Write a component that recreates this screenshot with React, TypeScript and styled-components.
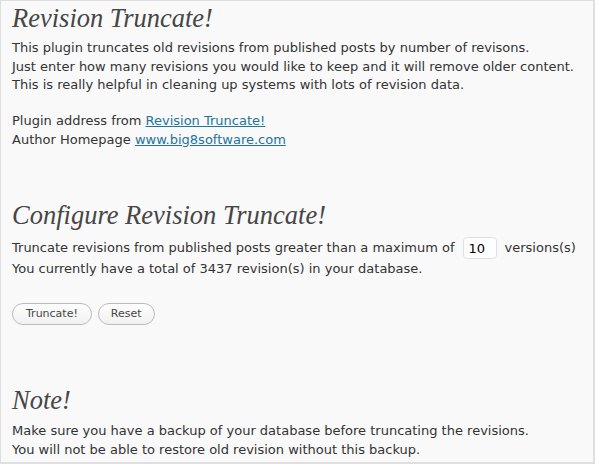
import React from "react";
import styled, { createGlobalStyle } from "styled-components";

const Global = createGlobalStyle`
  html, body { margin: 0; padding: 0; background: #f9f9f9; }
  * { box-sizing: border-box; }
`;

const Page = styled.div`
  width: 595px;
  height: 464px;
  background: #f9f9f9;
  border-top: 1px solid #dfdfdf;
  border-left: 1px solid #dfdfdf;
  border-right: 2px solid #dfdfdf;
  border-bottom: 2px solid #dfdfdf;
  padding: 0 11px;
  color: #333;
  font-family: "DejaVu Sans", Verdana, sans-serif;
  font-size: 13px;
  line-height: 18.6px;
  overflow: hidden;
`;

const Title = styled.h2<{ $top: number; $bottom: number }>`
  margin: ${(p) => p.$top}px 0 ${(p) => p.$bottom}px;
  font-family: "Liberation Serif", Georgia, serif;
  font-style: italic;
  font-weight: normal;
  font-size: 26.5px;
  line-height: 30px;
  color: #464646;
`;

const Para = styled.p<{ $bottom?: number }>`
  margin: 0 0 ${(p) => p.$bottom ?? 0}px;
`;

const Link = styled.a`
  color: #21759b;
  text-decoration: underline;
`;

const InputRow = styled.div`
  display: flex;
  align-items: center;
  height: 24px;
  white-space: nowrap;
`;

const NumInput = styled.input`
  width: 34px;
  height: 22px;
  margin: 0 8px 0 8px;
  padding: 0 5px;
  border: 1px solid #dfdfdf;
  border-radius: 4px;
  background: #fff;
  font-family: "DejaVu Sans", Verdana, sans-serif;
  font-size: 13px;
  color: #000;
  outline: none;
`;

const Buttons = styled.div`
  display: flex;
  gap: 6px;
  margin-top: 24px;
`;

const Button = styled.button<{ $pad: number }>`
  height: 22px;
  padding: 0 ${(p) => p.$pad}px;
  border: 1px solid #bbb;
  border-radius: 11px;
  background: linear-gradient(#fefefe, #f1f1f1);
  color: #464646;
  font-family: "DejaVu Sans", Verdana, sans-serif;
  font-size: 11px;
  line-height: 20px;
  cursor: pointer;
`;

export default function App() {
  return (
    <>
      <Global />
      <Page>
        <Title $top={2} $bottom={6}>Revision Truncate!</Title>
        <Para $bottom={17.4}>
          This plugin truncates old revisions from published posts by number of revisons.
          <br />
          Just enter how many revisions you would like to keep and it will remove older content.
          <br />
          This is really helpful in cleaning up systems with lots of revision data.
        </Para>
        <Para>
          Plugin address from <Link href="#">Revision Truncate!</Link>
          <br />
          Author Homepage <Link href="#">www.big8software.com</Link>
        </Para>
        <Title $top={51} $bottom={6}>Configure Revision Truncate!</Title>
        <InputRow>
          Truncate revisions from published posts greater than a maximum of
          <NumInput defaultValue="10" />
          versions(s)
        </InputRow>
        <Para>You currently have a total of 3437 revision(s) in your database.</Para>
        <Buttons>
          <Button $pad={13}>Truncate!</Button>
          <Button $pad={12}>Reset</Button>
        </Buttons>
        <Title $top={60} $bottom={7}>Note!</Title>
        <Para>
          Make sure you have a backup of your database before truncating the revisions.
          <br />
          You will not be able to restore old revision without this backup.
        </Para>
      </Page>
    </>
  );
}
